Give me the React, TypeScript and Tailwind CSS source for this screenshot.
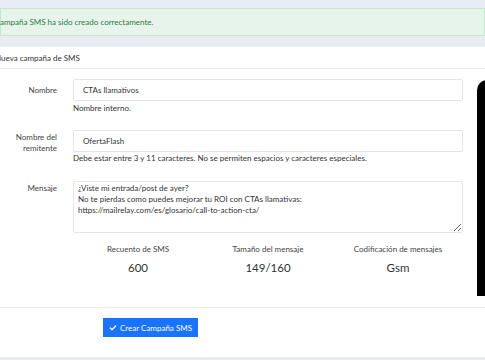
import { Check } from "lucide-react";

const stats = [
  { label: "Recuento de SMS", value: "600" },
  { label: "Tamaño del mensaje", value: "149/160" },
  { label: "Codificación de mensajes", value: "Gsm" },
];

const message = `¿Viste mi entrada/post de ayer?
No te pierdas como puedes mejorar tu ROI con CTAs llamativas:
https://mailrelay.com/es/glosario/call-to-action-cta/`;

export default function App() {
  return (
    <div
      className="relative w-[485px] h-[360px] overflow-hidden bg-[#e9ecf3] text-[#3a3a3a]"
      style={{ fontFamily: "Lato, 'Noto Sans', sans-serif" }}
    >
      <div className="pt-[8px]">
        {/* alert */}
        <div className="h-[28px] flex items-center bg-[#e6f4ea] border border-[#c5e6cf] text-[#2f7a47] text-[8px]">
          <span className="-ml-[15px]">La campaña SMS ha sido creado correctamente.</span>
        </div>

        {/* card */}
        <div className="mt-[11px] bg-white">
          <div className="h-[22px] flex items-center border-b border-[#eeeff3] text-[8px] text-[#333]">
            <span className="-ml-[5px]">Nueva campaña de SMS</span>
          </div>

          <div className="pt-[10px] pr-[22px] text-[8px]">
            <div className="grid grid-cols-[57px_1fr] gap-x-[16px]">
              <div className="h-[22px] flex items-center justify-end text-[#444]">Nombre</div>
              <div>
                <div className="h-[22px] flex items-center pl-[9px] border border-[#e4e5ea] rounded-[2px] text-[#333]">
                  CTAs llamativos
                </div>
                <div className="mt-[2px] leading-[10px] text-[#333]">Nombre interno.</div>
              </div>
            </div>

            <div className="mt-[17px] grid grid-cols-[57px_1fr] gap-x-[16px]">
              <div className="pt-[2px] text-right leading-[11px] text-[#444]">
                Nombre del
                <br />
                remitente
              </div>
              <div>
                <div className="h-[22px] flex items-center pl-[9px] border border-[#e4e5ea] rounded-[2px] text-[#333]">
                  OfertaFlash
                </div>
                <div className="mt-[1px] leading-[10px] text-[#333]">
                  Debe estar entre 3 y 11 caracteres. No se permiten espacios y caracteres especiales.
                </div>
              </div>
            </div>

            <div className="mt-[18px] grid grid-cols-[57px_1fr] gap-x-[16px]">
              <div className="pt-[2px] text-right leading-[11px] text-[#444]">Mensaje</div>
              <textarea
                readOnly
                defaultValue={message}
                className="h-[52px] w-full resize-y border border-[#e4e5ea] rounded-[2px] px-[4px] pt-[1px] leading-[11px] text-[8px] text-[#333] outline-none"
              />
            </div>

            <div className="mt-[10px] ml-[73px] grid grid-cols-3 text-center">
              {stats.map((s) => (
                <div key={s.label}>
                  <div className="text-[8px] leading-[12px] text-[#444]">{s.label}</div>
                  <div className="mt-[5px] text-[11.5px] leading-[16px] text-[#333]">{s.value}</div>
                </div>
              ))}
            </div>
          </div>

          <div className="mt-[31px] h-[50px] border-t border-[#eeeff3] pt-[10px] pl-[103px]">
            <button className="h-[19px] w-[95px] flex items-center justify-center gap-[3px] bg-[#1a73ff] text-white text-[8px]">
              <Check size={8} strokeWidth={4} />
              Crear Campaña SMS
            </button>
          </div>
        </div>
      </div>

      {/* phone mockup edge */}
      <div className="absolute left-[477px] top-[80px] w-[20px] h-[216px] bg-black rounded-tl-[10px]" />
    </div>
  );
}
